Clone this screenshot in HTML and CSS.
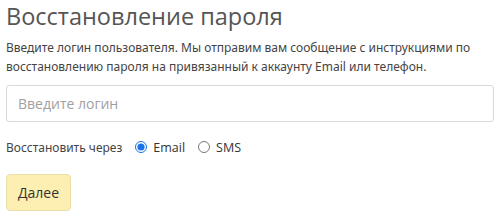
FILE: index.html
```html
<!DOCTYPE html>
<html lang="ru">
<head>
<meta charset="utf-8">
<link rel="stylesheet" href="styles.css">
</head>
<body>
<div class="page">
  <h1 class="title">Восстановление пароля</h1>
  <p class="desc">Введите логин пользователя. Мы отправим вам сообщение с инструкциями по восстановлению пароля на привязанный к аккаунту Email или телефон.</p>
  <input class="field" type="text" placeholder="Введите логин">
  <div class="method">
    <span class="method-label">Восстановить через</span>
    <label class="opt"><input type="radio" name="m" checked><span>Email</span></label>
    <label class="opt"><input type="radio" name="m"><span>SMS</span></label>
  </div>
  <button class="btn">Далее</button>
</div>
</body>
</html>
```
FILE: styles.css
```css
html, body { margin: 0; padding: 0; background: #fff; }
body { font-family: "Noto Sans", "Liberation Sans", sans-serif; color: #444; }
.page { padding: 0 6px; display: flex; flex-direction: column; align-items: flex-start; }
.title { font-family: "Open Sans", "Liberation Sans", sans-serif; font-weight: 400; font-size: 23.5px; line-height: 32px; margin: 0; color: #555; }
.desc { font-family: "Noto Sans", sans-serif; font-size: 12px; line-height: 19px; margin: 6px 0 0; color: #444; }
.field { box-sizing: border-box; width: 100%; height: 37px; margin-top: 9px; border: 1px solid #d9d9d9; border-radius: 3px; padding: 0 11px; font-family: "Open Sans", sans-serif; font-size: 14px; color: #333; }
.field::placeholder { color: #a0a0a0; }
.method { display: flex; align-items: center; margin-top: 15px; height: 20px; }
.method-label { font-family: "Noto Sans", sans-serif; font-size: 12px; color: #444; margin-right: 13px; }
.opt { display: flex; align-items: center; margin-right: 13px; font-family: "Open Sans", sans-serif; font-size: 12.5px; color: #333; }
.opt input { margin: 0 6px 0 0; width: 12px; height: 12px; accent-color: #1a73e8; }
.btn { margin-top: 17px; height: 37px; padding: 0 11px; background: #fdefb2; border: 1px solid #eadfa6; border-radius: 4px; font-family: "Open Sans", sans-serif; font-size: 14px; color: #333; }
```
